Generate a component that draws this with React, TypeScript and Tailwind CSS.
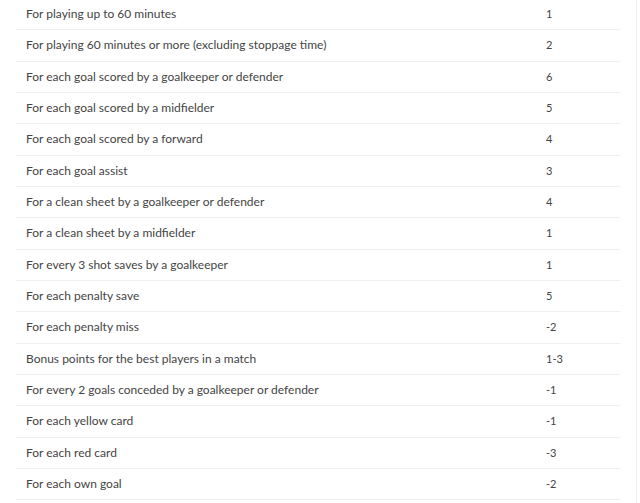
import React from "react";

const rows: [string, string][] = [
  ["For playing up to 60 minutes", "1"],
  ["For playing 60 minutes or more (excluding stoppage time)", "2"],
  ["For each goal scored by a goalkeeper or defender", "6"],
  ["For each goal scored by a midfielder", "5"],
  ["For each goal scored by a forward", "4"],
  ["For each goal assist", "3"],
  ["For a clean sheet by a goalkeeper or defender", "4"],
  ["For a clean sheet by a midfielder", "1"],
  ["For every 3 shot saves by a goalkeeper", "1"],
  ["For each penalty save", "5"],
  ["For each penalty miss", "-2"],
  ["Bonus points for the best players in a match", "1-3"],
  ["For every 2 goals conceded by a goalkeeper or defender", "-1"],
  ["For each yellow card", "-1"],
  ["For each red card", "-3"],
  ["For each own goal", "-2"],
];

export default function App() {
  return (
    <div className="w-[640px] h-[503px] overflow-hidden bg-white flex">
      <div className="w-[636px] pl-4 pr-4 mt-[-1px]">
        {rows.map(([label, value], i) => (
          <div
            key={i}
            className="flex items-center h-[31.33px] border-b border-[#efefef] text-[12px] text-[#444444]"
            style={{ fontFamily: "Lato, 'Open Sans', sans-serif" }}
          >
            <div className="flex-1 pl-[10px]">{label}</div>
            <div className="w-[74px] text-[11px]">{value}</div>
          </div>
        ))}
      </div>
      <div className="w-px bg-[#ededed] h-full" />
    </div>
  );
}
